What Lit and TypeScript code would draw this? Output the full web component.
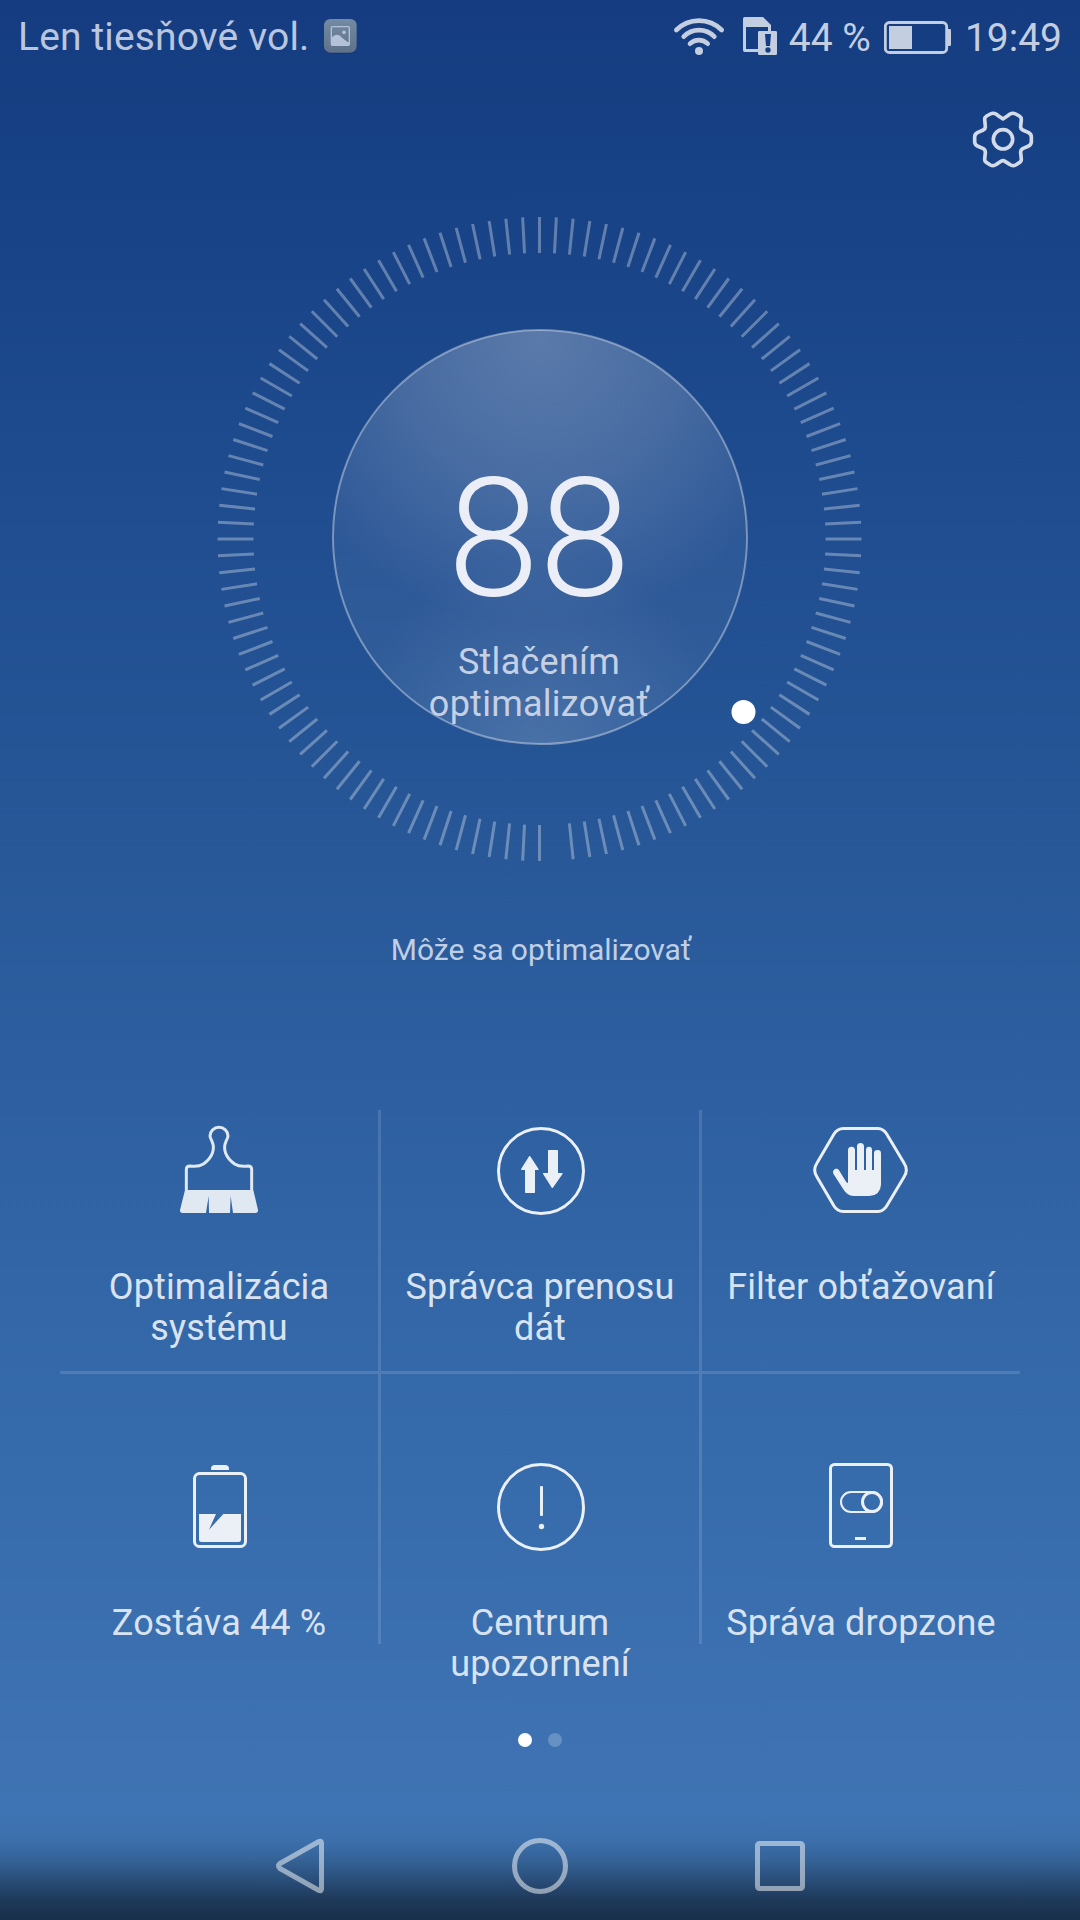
import { LitElement, html, svg, css } from "lit";
import { customElement } from "lit/decorators.js";

const DIAL_TICKS = Array.from({ length: 120 }, (_, i) => i * 3).filter((a) => a !== 177);

const brushIcon = svg`
  <path fill="none" stroke="currentColor" stroke-width="9" stroke-linejoin="round"
    d="M79 270V208Q79 198 90 198C104 200 118 200 130 192C158 172 166 146 156 124C152 116 150 112 150 108A27 26 0 0 1 204 108C204 112 202 116 198 124C188 146 196 172 224 192C236 200 250 200 264 198Q275 198 275 208V270"/>
  <path fill="currentColor"
    d="M75 270H280L294 330Q295 339 286 339H219L212 288L210 339H147L146 288L138 339H68Q59 339 60 330Z"/>`;

const transferIcon = svg`
  <circle cx="483" cy="213" r="127.5" fill="none" stroke="currentColor" stroke-width="9"/>
  <path fill="currentColor" stroke="currentColor" stroke-width="4" stroke-linejoin="round"
    d="M449 170L474 208H463V277H437V208H425ZM506 152H532V221H546L517 262L491 221H506Z"/>`;

const handIcon = svg`
  <path fill="none" stroke="currentColor" stroke-width="9"
    d="M430 85.500H534Q550 86 560 102L612 189Q626 210 612 231L560 318Q550 334 534 334.500H430Q412 334 402 318L351 231Q337 210 351 189L402 102Q412 86 430 85.500Z"/>
  <path fill="currentColor"
    d="M444 249V151A10.500 11 0 0 1 465 151V210H471V140A10.500 11 0 0 1 492 140V210H498V150A9 10 0 0 1 516 150V210H522V160A10.500 10 0 0 1 543 160V254Q541 286 508 288H460Q442 287 431 269L401 223C394 210 410 200 418 212L439 247Z"/>`;

const batteryIcon = svg`
  <path fill="currentColor" d="M453 90V86Q453 75 465 75H495Q507 75 507 86V90Z"/>
  <rect x="403.500" y="100.500" width="153" height="219" rx="15" fill="none" stroke="currentColor" stroke-width="9"/>
  <path fill="currentColor"
    d="M417 222H468L447 269L490 222H543V299Q543 306 536 306H424Q417 306 417 299Z"/>`;

const alertIcon = svg`
  <circle cx="303" cy="201" r="127.500" fill="none" stroke="currentColor" stroke-width="9"/>
  <rect x="300" y="138" width="9" height="90" rx="3" fill="currentColor"/>
  <circle cx="304.500" cy="259.500" r="8" fill="currentColor"/>`;

const dropzoneIcon = svg`
  <rect x="391.500" y="73.500" width="183" height="246" rx="12" fill="none" stroke="currentColor" stroke-width="9"/>
  <rect x="423" y="156" width="123" height="60" rx="30" fill="none" stroke="currentColor" stroke-width="6"/>
  <circle cx="516" cy="186" r="28.500" fill="none" stroke="currentColor" stroke-width="9"/>
  <rect x="465" y="291" width="33" height="9" fill="currentColor"/>`;

const ROWS = [
  [
    { label: ["Optimalizácia", "systému"], box: "33 69 288 288", icon: brushIcon, dim: true },
    { label: ["Správca prenosu", "dát"], box: "336 69 288 288", icon: transferIcon, dim: false },
    { label: ["Filter obťažovaní"], box: "339 69 288 288", icon: handIcon, dim: false },
  ],
  [
    { label: ["Zostáva 44 %"], box: "333 57 288 288", icon: batteryIcon, dim: false },
    { label: ["Centrum", "upozornení"], box: "156 57 288 288", icon: alertIcon, dim: false },
    { label: ["Správa dropzone"], box: "339 57 288 288", icon: dropzoneIcon, dim: false },
  ],
];

@customElement("status-bar")
class StatusBar extends LitElement {
  static styles = css`
    :host {
      display: flex;
      justify-content: space-between;
      height: 74px;
      padding: 0 18px 0 18px;
      color: #c4cee1;
      font-size: 39px;
      line-height: 46px;
    }
    .side { display: flex; align-items: flex-start; }
    .carrier { padding-top: 14px; color: #b9c6de; letter-spacing: 0.14px; }
    .text { padding-top: 15px; white-space: pre; }
    .photo { margin: 19px 0 0 15px; }
    svg { display: block; flex: none; }
    .wifi { margin: 17px 18px 0 0; }
    .sim { margin: 17px 11px 0 0; }
    .battery { margin: 21px 13px 0 13px; }
  `;
  render() {
    return html`
      <div class="side">
        <span class="carrier">Len tiesňové vol.</span>
        <svg class="photo" width="33" height="35" viewBox="944 57 99 105">
          <defs>
            <linearGradient id="tile" x1="0" y1="0" x2="0" y2="1">
              <stop offset="0" stop-color="#748ba5"/><stop offset="1" stop-color="#5e7189"/>
            </linearGradient>
          </defs>
          <rect x="944" y="60" width="98" height="101" rx="19" fill="#12305f" opacity=".6"/>
          <rect x="944" y="57" width="98" height="101" rx="19" fill="url(#tile)"/>
          <rect x="966" y="80" width="54" height="56" rx="3" fill="none" stroke="#b3c2d6" stroke-width="4"/>
          <circle cx="1004" cy="97" r="5.500" fill="#b3c2d6"/>
          <path fill="#b3c2d6" d="M966 115C974 101 990 101 998 113L1016 127H1020V136H966Z"/>
        </svg>
      </div>
      <div class="side">
        <svg class="wifi" width="52" height="39" viewBox="99 51 156 117" fill="none"
          stroke="currentColor" stroke-width="14" stroke-linecap="round">
          <path d="M109 90A96 96 0 0 1 245 90M131 110A64 64 0 0 1 223 110M150 131A38 38 0 0 1 203 131"/>
          <circle cx="177" cy="153" r="12" fill="currentColor" stroke="none"/>
        </svg>
        <svg class="sim" width="35" height="39" viewBox="309 51 105 117" fill="currentColor">
          <path fill-rule="evenodd" d="M314 51H369L393 75V93H384V81H318V147H354V156H314Q309 156 309 151V56Q309 51 314 51Z"/>
          <path fill-rule="evenodd" d="M358 93H407Q411 93 411 97V161Q411 165 407 165H358Q354 165 354 161V97Q354 93 358 93ZM375 102L378 138H390L393 102ZM384 142A8 8 0 1 0 384 158A8 8 0 1 0 384 142Z"/>
        </svg>
        <span class="text">44 %</span>
        <svg class="battery" width="68" height="33" viewBox="732 63 204 99">
          <rect x="736" y="67.500" width="184" height="90" rx="12" fill="none" stroke="currentColor" stroke-width="8.500"/>
          <rect x="747" y="78" width="69" height="69" fill="currentColor"/>
          <path d="M923 87H929Q933 87 933 91V134Q933 138 929 138H923Z" fill="currentColor"/>
        </svg>
        <span class="text">19:49</span>
      </div>
    `;
  }
}

@customElement("score-dial")
class ScoreDial extends LitElement {
  static styles = css`
    :host { display: grid; width: 646px; height: 646px; }
    .dial, .readout { grid-area: 1 / 1; }
    .dial { display: block; }
    .readout { display: flex; flex-direction: column; align-items: center; padding-top: 228px; }
    .score { margin-right: 2px; font-size: 165px; font-weight: 300; line-height: 190px; color: #ebeef6; }
    .hint { margin: 7px 2px 0 0; font-size: 36px; line-height: 42px; letter-spacing: 0.25px; text-align: center; color: #c5d0e4; }
    .hint-line { display: block; }
  `;
  render() {
    return html`
      <svg class="dial" width="646" height="646" viewBox="217 216 646 646">
        <defs>
          <radialGradient id="top" gradientUnits="userSpaceOnUse" cx="540" cy="335" r="290">
            <stop offset="0" stop-color="#fff" stop-opacity=".235"/>
            <stop offset=".5" stop-color="#fff" stop-opacity=".14"/>
            <stop offset="1" stop-color="#fff" stop-opacity="0"/>
          </radialGradient>
          <radialGradient id="low" gradientUnits="userSpaceOnUse" cx="540" cy="745" r="190">
            <stop offset="0" stop-color="#fff" stop-opacity=".12"/>
            <stop offset="1" stop-color="#fff" stop-opacity="0"/>
          </radialGradient>
        </defs>
        <g stroke="#fff" stroke-opacity=".32" stroke-width="3">
          ${DIAL_TICKS.map((a) => svg`<line x1="539.500" y1="217" x2="539.500" y2="253" transform="rotate(${a} 539.500 539)"/>`)}
        </g>
        <circle cx="540" cy="537" r="207" fill="#fff" fill-opacity=".06"/>
        <circle cx="540" cy="537" r="207" fill="url(#top)"/>
        <circle cx="540" cy="537" r="207" fill="url(#low)" stroke="#fff" stroke-opacity=".38" stroke-width="2"/>
        <circle cx="743.500" cy="712" r="12" fill="#fff"/>
      </svg>
      <div class="readout">
        <span class="score">88</span>
        <span class="hint">
          <span class="hint-line">Stlačením</span>
          <span class="hint-line">optimalizovať</span>
        </span>
      </div>
    `;
  }
}

@customElement("feature-grid")
class FeatureGrid extends LitElement {
  static styles = css`
    :host { display: block; width: 960px; }
    .row { display: grid; grid-template-columns: 318px 318px 318px; column-gap: 3px; height: 261px; }
    .row + .row { height: 270px; border-top: 3px solid rgba(255, 255, 255, 0.13); }
    .cell { display: flex; flex-direction: column; align-items: center; padding-top: 13px; }
    .row + .row .cell { padding-top: 85px; height: 185px; }
    .cell + .cell {
      margin-left: -3px;
      border-left: 3px solid rgba(255, 255, 255, 0.13);
    }
    .icon { display: block; flex: none; width: 96px; height: 96px; color: #ebf0f7; }
    .icon.dim { color: #e0e8f2; }
    .label {
      margin-top: 48px;
      font-size: 36px;
      line-height: 41px;
      letter-spacing: 0.12px;
      text-align: center;
      color: #d9e3f0;
      white-space: nowrap;
    }
    .line { display: block; }
  `;
  render() {
    return ROWS.map(
      (row) => html`
        <div class="row">
          ${row.map(
            (f) => html`
              <div class="cell">
                <svg class="icon ${f.dim ? "dim" : ""}" viewBox=${f.box}>${f.icon}</svg>
                <span class="label">${f.label.map((l) => html`<span class="line">${l}</span>`)}</span>
              </div>
            `
          )}
        </div>
      `
    );
  }
}

@customElement("nav-bar")
class NavBar extends LitElement {
  static styles = css`
    :host {
      display: flex;
      justify-content: center;
      gap: 180px;
      height: 84px;
      padding-top: 36px;
      background: linear-gradient(
        rgba(8, 16, 28, 0) 10%,
        rgba(8, 16, 28, 0.05) 33%,
        rgba(8, 16, 28, 0.19) 50%,
        rgba(8, 16, 28, 0.4) 67%,
        rgba(8, 16, 28, 0.6) 83%,
        rgba(8, 16, 28, 0.7) 100%
      );
    }
    .key { display: block; width: 60px; height: 60px; opacity: 0.5; }
  `;
  render() {
    return html`
      <svg class="key" viewBox="0 0 60 60" fill="none" stroke="#fff" stroke-width="5" stroke-linejoin="round">
        <path d="M51.500 7Q51.500 4.500 49 5.500L10 27.500Q7 30 10 32.500L49 54.500Q51.500 55.500 51.500 53Z"/>
      </svg>
      <svg class="key" viewBox="0 0 60 60" fill="none" stroke="#fff" stroke-width="5">
        <circle cx="30" cy="30" r="25.500"/>
      </svg>
      <svg class="key" viewBox="0 0 60 60" fill="none" stroke="#fff" stroke-width="5">
        <rect x="7.500" y="7.500" width="45" height="45" rx="2"/>
      </svg>
    `;
  }
}

@customElement("app-root")
class AppRoot extends LitElement {
  static styles = css`
    :host {
      display: flex;
      flex-direction: column;
      width: 1080px;
      height: 1920px;
      overflow: hidden;
      font-family: Roboto, "Noto Sans", sans-serif;
      background: linear-gradient(#153c80 0px, #174285 180px, #204e91 540px, #285898 860px, #2e60a1 1100px, #366bab 1440px, #3e72b2 1760px, #4078b6 1920px);
    }
    .toolbar { display: flex; justify-content: flex-end; height: 106px; padding: 36px 46px 0 0; }
    .gear { display: block; width: 62px; height: 60px; }
    .dial { align-self: center; }
    .status { margin: 70px 0 0; text-align: center; font-size: 30px; line-height: 36px; color: #c0cfe4; padding-left: 2px; letter-spacing: -0.04px; }
    .grid { align-self: center; margin-top: 142px; }
    .pager { display: flex; justify-content: center; gap: 16px; margin-top: 89px; }
    .page { width: 14px; height: 14px; border-radius: 50%; background: rgba(255, 255, 255, 0.22); }
    .page.active { background: #fff; }
    .nav { margin-top: auto; }
  `;
  render() {
    return html`
      <status-bar></status-bar>
      <div class="toolbar">
        <svg class="gear" viewBox="996 330 186 180" fill="none" stroke="#d3dbe9" stroke-width="11" stroke-linejoin="round">
          <path d="M1089 357Q1094 354 1109 343Q1118 337 1127 342L1138 348Q1144 352 1144 358L1142 378Q1141 386 1148 390L1166 398Q1174 403 1174 410V426Q1174 433 1166 438L1148 446Q1141 450 1142 458L1144 478Q1144 485 1138 488L1127 495Q1118 500 1109 493L1095 484Q1089 480 1083 484L1069 493Q1060 500 1051 495L1040 488Q1034 485 1034 478L1036 458Q1037 450 1030 446L1012 438Q1004 433 1004 426V410Q1004 403 1012 398L1030 390Q1037 386 1036 378L1034 358Q1034 352 1040 348L1051 342Q1060 337 1069 343Q1084 354 1089 357Z"/>
          <circle cx="1089" cy="418" r="29"/>
        </svg>
      </div>
      <score-dial class="dial"></score-dial>
      <div class="status">Môže sa optimalizovať</div>
      <feature-grid class="grid"></feature-grid>
      <div class="pager"><span class="page active"></span><span class="page"></span></div>
      <nav-bar class="nav"></nav-bar>
    `;
  }
}
